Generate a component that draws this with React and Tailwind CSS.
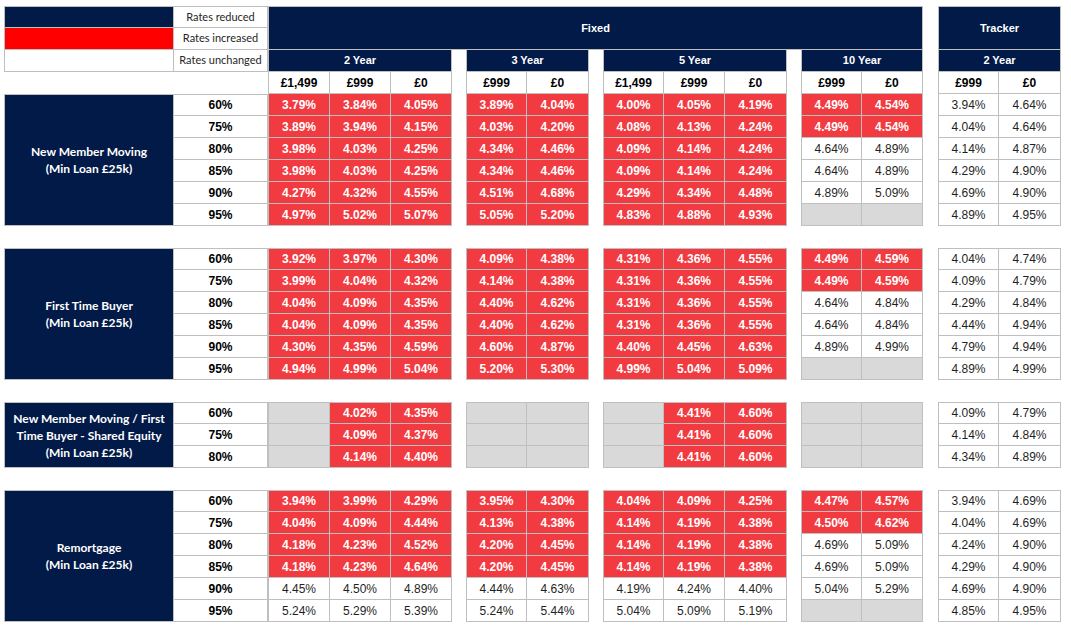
import React from 'react';

const GROUPS = [3, 2, 3, 2, 2];

const SECTIONS = [
  {
    label: ['New Member Moving', '(Min Loan £25k)'],
    rows: [
      ['60%', 'r3.79 r3.84 r4.05 r3.89 r4.04 r4.00 r4.05 r4.19 r4.49 r4.54 3.94 4.64'],
      ['75%', 'r3.89 r3.94 r4.15 r4.03 r4.20 r4.08 r4.13 r4.24 r4.49 r4.54 4.04 4.64'],
      ['80%', 'r3.98 r4.03 r4.25 r4.34 r4.46 r4.09 r4.14 r4.24 4.64 4.89 4.14 4.87'],
      ['85%', 'r3.98 r4.03 r4.25 r4.34 r4.46 r4.09 r4.14 r4.24 4.64 4.89 4.29 4.90'],
      ['90%', 'r4.27 r4.32 r4.55 r4.51 r4.68 r4.29 r4.34 r4.48 4.89 5.09 4.69 4.90'],
      ['95%', 'r4.97 r5.02 r5.07 r5.05 r5.20 r4.83 r4.88 r4.93 - - 4.89 4.95'],
    ],
  },
  {
    label: ['First Time Buyer', '(Min Loan £25k)'],
    rows: [
      ['60%', 'r3.92 r3.97 r4.30 r4.09 r4.38 r4.31 r4.36 r4.55 r4.49 r4.59 4.04 4.74'],
      ['75%', 'r3.99 r4.04 r4.32 r4.14 r4.38 r4.31 r4.36 r4.55 r4.49 r4.59 4.09 4.79'],
      ['80%', 'r4.04 r4.09 r4.35 r4.40 r4.62 r4.31 r4.36 r4.55 4.64 4.84 4.29 4.84'],
      ['85%', 'r4.04 r4.09 r4.35 r4.40 r4.62 r4.31 r4.36 r4.55 4.64 4.84 4.44 4.94'],
      ['90%', 'r4.30 r4.35 r4.59 r4.60 r4.87 r4.40 r4.45 r4.63 4.89 4.99 4.79 4.94'],
      ['95%', 'r4.94 r4.99 r5.04 r5.20 r5.30 r4.99 r5.04 r5.09 - - 4.89 4.99'],
    ],
  },
  {
    label: ['New Member Moving / First', 'Time Buyer - Shared Equity', '(Min Loan £25k)'],
    rows: [
      ['60%', '- r4.02 r4.35 - - - r4.41 r4.60 - - 4.09 4.79'],
      ['75%', '- r4.09 r4.37 - - - r4.41 r4.60 - - 4.14 4.84'],
      ['80%', '- r4.14 r4.40 - - - r4.41 r4.60 - - 4.34 4.89'],
    ],
  },
  {
    label: ['Remortgage', '(Min Loan £25k)'],
    rows: [
      ['60%', 'r3.94 r3.99 r4.29 r3.95 r4.30 r4.04 r4.09 r4.25 r4.47 r4.57 3.94 4.69'],
      ['75%', 'r4.04 r4.09 r4.44 r4.13 r4.38 r4.14 r4.19 r4.38 r4.50 r4.62 4.04 4.69'],
      ['80%', 'r4.18 r4.23 r4.52 r4.20 r4.45 r4.14 r4.19 r4.38 4.69 5.09 4.24 4.90'],
      ['85%', 'r4.18 r4.23 r4.64 r4.20 r4.45 r4.14 r4.19 r4.38 4.69 5.09 4.29 4.90'],
      ['90%', '4.45 4.50 4.89 4.44 4.63 4.19 4.24 4.40 5.04 5.29 4.69 4.90'],
      ['95%', '5.24 5.29 5.39 5.24 5.44 5.04 5.09 5.19 - - 4.85 4.95'],
    ],
  },
];

const PRICES = ['£1,499', '£999', '£0', '£999', '£0', '£1,499', '£999', '£0', '£999', '£0', '£999', '£0'];

const sans = "font-['Liberation_Sans',Arial,sans-serif]";
const lato = "font-['Lato','Liberation_Sans',sans-serif]";

function Cell({ className = '', children }) {
  return (
    <div className={`flex items-center justify-center border-[#bfbfbf] ${className}`}>
      {children}
    </div>
  );
}

// splits a row of 12 values into the five column groups with spacer cells between
function groupCells(values, render) {
  const out = [];
  let i = 0;
  GROUPS.forEach((n, g) => {
    if (g > 0) out.push(<div key={`gap${g}`} />);
    for (let k = 0; k < n; k++) {
      out.push(render(values[i], i, k === 0));
      i++;
    }
  });
  return out;
}

function RateCell({ value, first, top }) {
  const edge = `border-r border-b ${first ? 'border-l' : ''} ${top ? 'border-t' : ''}`;
  if (value === '-') return <Cell className={`${edge} bg-[#d9d9d9]`} />;
  if (value.startsWith('r')) {
    return (
      <Cell className={`${edge} bg-[#f23a41] text-white font-bold text-[12px] ${sans}`}>
        {value.slice(1)}%
      </Cell>
    );
  }
  return (
    <Cell className={`${edge} bg-white text-[#1f1f1f] text-[12px] ${sans}`}>{value}%</Cell>
  );
}

function Section({ section, index }) {
  const span = section.rows.length === 6 ? 'row-span-6' : 'row-span-3';
  const cells = [];
  section.rows.forEach(([ltv, data], r) => {
    const first = r === 0;
    if (first) {
      cells.push(
        <Cell
          key="label"
          className={`${span} border bg-[#011a48] text-white text-[12px] font-bold leading-[17px] text-center ${lato}`}
        >
          <div>
            {section.label.map((l) => (
              <div key={l}>{l}</div>
            ))}
          </div>
        </Cell>
      );
    }
    cells.push(
      <Cell
        key={`ltv${r}`}
        className={`border-r border-b ${first ? 'border-t' : ''} bg-white text-black text-[12px] font-bold ${sans}`}
      >
        {ltv}
      </Cell>
    );
    const values = data.split(' ');
    cells.push(
      ...groupCells(values, (v, i, gFirst) => (
        <RateCell key={`c${r}-${i}`} value={v} first={gFirst} top={first && index > 0} />
      ))
    );
  });
  return cells;
}

export default function App() {
  const years = [
    ['2 Year', 'col-span-3'],
    ['3 Year', 'col-span-2'],
    ['5 Year', 'col-span-3'],
    ['10 Year', 'col-span-2'],
  ];

  return (
    <div className="w-[1071px] h-[628px] bg-white pt-[6px] pl-[4px]">
      <div className="grid grid-cols-[170px_94px_62px_61px_61px_14px_61px_62px_14px_61px_61px_62px_14px_61px_61px_15px_61px_62px] auto-rows-[22px]">
        {/* legend + top headers */}
        <Cell className="border bg-[#011a48]" />
        <Cell className={`border-t border-r border-b text-[11px] text-[#262626] ${lato}`}>Rates reduced</Cell>
        <Cell className={`col-span-13 row-span-2 border bg-[#011a48] text-white text-[11px] font-bold ${sans}`}>Fixed</Cell>
        <div />
        <Cell className={`col-span-2 row-span-2 border bg-[#011a48] text-white text-[11px] font-bold ${sans}`}>Tracker</Cell>

        <Cell className="border-l border-r border-b bg-[#ff0000]" />
        <Cell className={`border-r border-b text-[11px] text-[#262626] ${lato}`}>Rates increased</Cell>
        <div />

        <Cell className="border-l border-r border-b bg-white" />
        <Cell className={`border-r border-b text-[11px] text-[#262626] ${lato}`}>Rates unchanged</Cell>
        {years.map(([y, span], i) => (
          <React.Fragment key={y}>
            <Cell className={`${span} border-l border-r border-b bg-[#011a48] text-white text-[11px] font-bold ${sans}`}>{y}</Cell>
            <div />
          </React.Fragment>
        ))}
        <Cell className={`col-span-2 border-l border-r border-b bg-[#011a48] text-white text-[11px] font-bold ${sans}`}>2 Year</Cell>

        {/* price row */}
        <div className="col-span-2" />
        {groupCells(PRICES, (p, i, gFirst) => (
          <Cell
            key={`p${i}`}
            className={`border-r border-b ${gFirst ? 'border-l' : ''} bg-white text-black text-[12px] font-bold ${sans}`}
          >
            {p}
          </Cell>
        ))}

        {SECTIONS.map((s, i) => (
          <React.Fragment key={i}>
            {i > 0 && <div className="col-span-18" />}
            <Section section={s} index={i} />
          </React.Fragment>
        ))}
      </div>
    </div>
  );
}
